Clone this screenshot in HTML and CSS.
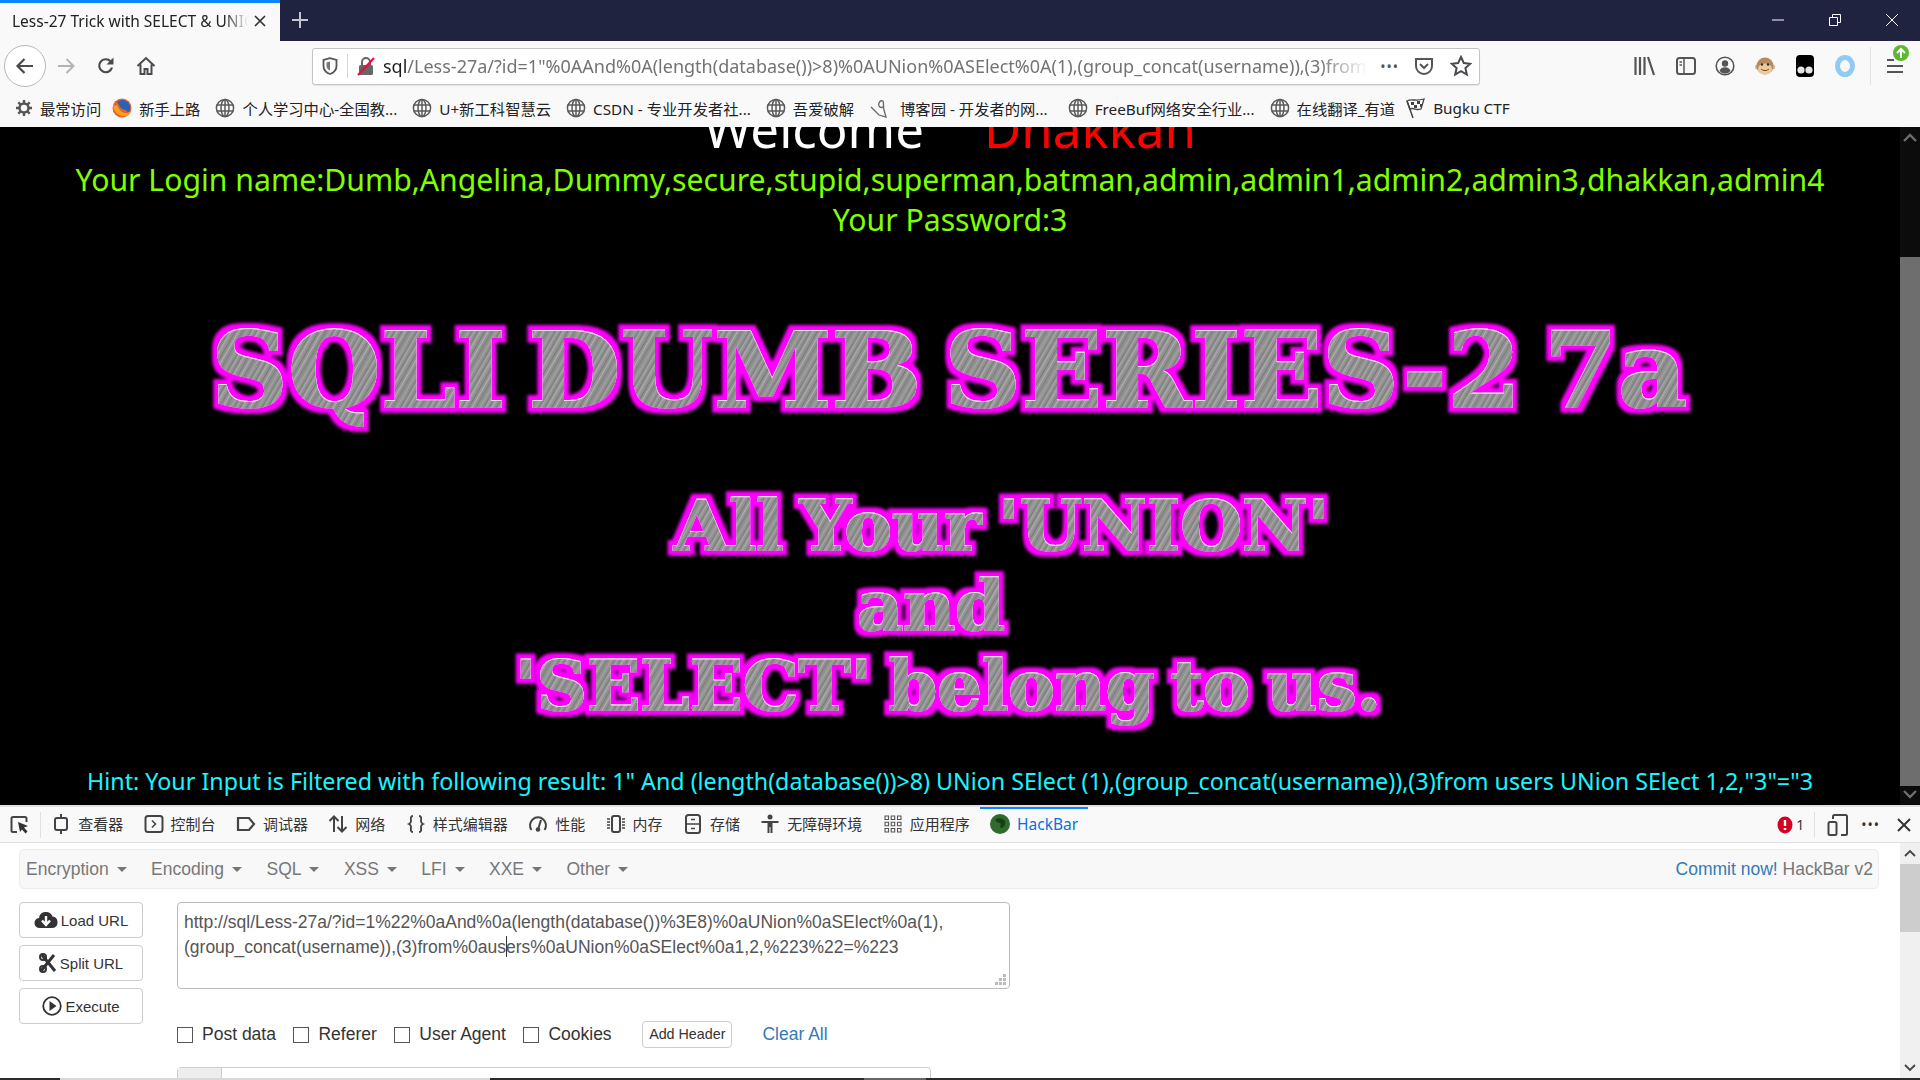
FILE: index.html
```html
<!DOCTYPE html>
<html lang="en">
<head>
  <meta charset="UTF-8" />
  <title>Less-27 Trick with SELECT &amp; UNION</title>
  <link rel="stylesheet" href="styles.css">
</head>
<body>
  <svg class="defs" width="0" height="0">
    <symbol id="globe" viewBox="0 0 20 20">
      <g fill="none" stroke="#5a5a5a" stroke-width="1.5">
        <circle cx="10" cy="10" r="8.6"/><ellipse cx="10" cy="10" rx="4" ry="8.6"/>
        <path d="M10 1.4v17.2M1.8 7h16.4M1.8 13h16.4"/>
      </g>
    </symbol>
    <pattern id="brushed" width="24" height="24" patternUnits="userSpaceOnUse" patternTransform="rotate(30)">
      <rect width="24" height="24" fill="#929292"/>
      <rect width="1" height="24" fill="#a8a8a8"/>
      <rect x="3" width="1" height="24" fill="#7a7a7a"/>
      <rect x="5" width="1.5" height="24" fill="#aaaaaa"/>
      <rect x="9" width="1" height="24" fill="#787878"/>
      <rect x="12" width="1" height="24" fill="#b2b2b2"/>
      <rect x="15" width="1.5" height="24" fill="#808080"/>
      <rect x="19" width="1" height="24" fill="#a4a4a4"/>
      <rect x="22" width="1" height="24" fill="#7c7c7c"/>
    </pattern>
    <filter id="glow" x="-5%" y="-30%" width="110%" height="160%">
      <feMorphology in="SourceAlpha" operator="dilate" radius="5" result="fat"/>
      <feGaussianBlur in="fat" stdDeviation="1.500" result="soft"/>
      <feFlood flood-color="#ff00ff"/>
      <feComposite in2="soft" operator="in" result="pink"/>
      <feOffset in="SourceAlpha" dy="1" result="down"/>
      <feComposite in="SourceAlpha" in2="down" operator="out" result="edge"/>
      <feFlood flood-color="#ffffff" flood-opacity="0.8"/>
      <feComposite in2="edge" operator="in" result="light"/>
      <feMerge><feMergeNode in="pink"/><feMergeNode in="SourceGraphic"/><feMergeNode in="light"/></feMerge>
    </filter>
  </svg>

  <div class="tabbar">
    <div class="tab">
      <span class="tab-title">Less-27 Trick with SELECT &amp; UNION</span>
      <svg class="tab-close" width="14" height="14" viewBox="0 0 14 14"><path d="M2 2l10 10M12 2L2 12" stroke="#333" stroke-width="1.7"/></svg>
    </div>
    <svg class="new-tab" width="18" height="18" viewBox="0 0 18 18"><path d="M9 1v16M1 9h16" stroke="#c4c6d0" stroke-width="2"/></svg>
    <div class="win-btns">
      <svg width="14" height="14" viewBox="0 0 14 14"><path d="M1 7h12" stroke="#fff" stroke-width="1"/></svg>
      <svg width="14" height="14" viewBox="0 0 14 14"><path d="M1.5 4.5h8v8h-8zM4.500 4.500V1.500h8v8h-3" fill="none" stroke="#fff" stroke-width="1"/></svg>
      <svg width="14" height="14" viewBox="0 0 14 14"><path d="M1 1l12 12M13 1L1 13" stroke="#fff" stroke-width="1"/></svg>
    </div>
  </div>

  <div class="navbar">
    <div class="back-btn">
      <svg width="20" height="20" viewBox="0 0 20 20"><path d="M18 10H3M9.500 3L2.500 10l7 7" fill="none" stroke="#4a4a4f" stroke-width="2.200"/></svg>
    </div>
    <svg class="nav-icon" width="20" height="20" viewBox="0 0 20 20"><path d="M2 10h15M10.500 3l7 7-7 7" fill="none" stroke="#b4b4b6" stroke-width="2"/></svg>
    <svg class="nav-icon" width="20" height="20" viewBox="0 0 20 20"><path d="M16 11.500A6.500 6.500 0 1 1 14.500 5.300" fill="none" stroke="#4a4a4f" stroke-width="2.200"/><path d="M17.500 1.500v7h-7z" fill="#4a4a4f"/></svg>
    <svg class="nav-icon" width="20" height="20" viewBox="0 0 20 20"><path d="M1.500 10L10 2l8.500 8M4.500 8.500V18h4v-5h3v5h4V8.500" fill="none" stroke="#4a4a4f" stroke-width="2"/></svg>

    <div class="urlbar">
      <svg class="url-shield" width="16" height="18" viewBox="0 0 16 18"><path d="M8 1.200L1.500 3v6c0 4 3 6.800 6.500 8 3.500-1.200 6.500-4 6.500-8V3z" fill="none" stroke="#555" stroke-width="1.800"/><path d="M8 4.500L4.500 5.500v3.500c0 2 1.500 3.600 3.500 4.500z" fill="#777"/></svg>
      <span class="url-sep"></span>
      <svg class="url-lock" width="18" height="20" viewBox="0 0 18 20"><rect x="2" y="9" width="14" height="10" rx="1.500" fill="#666"/><path d="M5 9V6a4 4 0 0 1 8 0v3" fill="none" stroke="#666" stroke-width="2"/><path d="M1 19L17 2" stroke="#ff0039" stroke-width="2"/></svg>
      <div class="url-text"><b>sql</b>/Less-27a/?id=1"%0AAnd%0A(length(database())&gt;8)%0AUNion%0ASElect%0A(1),(group_concat(username)),(3)from%0Ausers%0AUNion</div>
      <span class="url-dots">•••</span>
      <svg width="20" height="20" viewBox="0 0 20 20"><path d="M2 3h16v7a8 8 0 0 1-16 0z" fill="none" stroke="#555" stroke-width="2"/><path d="M6 8l4 4 4-4" fill="none" stroke="#555" stroke-width="2"/></svg>
      <svg class="url-star" width="22" height="22" viewBox="0 0 22 22"><path d="M11 2l2.800 6 6.400.7-4.800 4.300 1.400 6.500L11 16.200 5.200 19.500l1.400-6.500L1.800 8.700 8.200 8z" fill="none" stroke="#4a4a4f" stroke-width="2"/></svg>
    </div>

    <div class="tools">
      <svg width="24" height="22" viewBox="0 0 24 22"><path d="M2.500 2v18M7 2v18M11.500 2v18M15 2l6 18" stroke="#555" stroke-width="2.200"/></svg>
      <svg width="20" height="20" viewBox="0 0 20 20"><rect x="1" y="2" width="18" height="16" rx="2.500" fill="none" stroke="#555" stroke-width="2"/><path d="M8 2v16M3.500 6h2.500M3.500 9h2.500" stroke="#555" stroke-width="1.500"/></svg>
      <svg width="20" height="20" viewBox="0 0 20 20"><circle cx="10" cy="10" r="8.800" fill="none" stroke="#555" stroke-width="1.600"/><circle cx="10" cy="7.500" r="3.200" fill="#555"/><path d="M4.500 15c1-3 3-3.800 5.500-3.800s4.500.8 5.500 3.800a7 7 0 0 1-11 0z" fill="#555"/></svg>
      <svg width="22" height="22" viewBox="0 0 22 22"><circle cx="3.500" cy="12" r="2.500" fill="#d8b08c"/><circle cx="18.500" cy="12" r="2.500" fill="#d8b08c"/><circle cx="11" cy="11" r="8.500" fill="#b98a5e"/><ellipse cx="11" cy="14" rx="7" ry="5.500" fill="#ecc99f"/><circle cx="8" cy="9.500" r="1.200" fill="#333"/><circle cx="14" cy="9.500" r="1.200" fill="#333"/><path d="M7 14c2 2 6 2 8 0" fill="none" stroke="#6b4a2c" stroke-width="1"/></svg>
      <svg width="20" height="24" viewBox="0 0 20 24"><rect x="1" y="1" width="18" height="22" rx="4" fill="#000"/><circle cx="6" cy="16" r="3.600" fill="#e6e6e6"/><circle cx="14" cy="16" r="3.600" fill="#e6e6e6"/></svg>
      <svg width="22" height="24" viewBox="0 0 22 24"><ellipse cx="11" cy="12" rx="7.500" ry="8.500" fill="none" stroke="#8fcbf5" stroke-width="5"/></svg>
      <span class="tools-sep"></span>
      <div class="menu-btn">
        <svg width="18" height="18" viewBox="0 0 18 18"><path d="M1 3h7M1 9h16M1 15h16" stroke="#555" stroke-width="2.200"/></svg>
        <svg class="menu-badge" width="16" height="16" viewBox="0 0 16 16"><circle cx="8" cy="8" r="8" fill="#5cb82e"/><path d="M8 13V4M4 8l4-4 4 4" fill="none" stroke="#fff" stroke-width="2"/></svg>
      </div>
    </div>
  </div>

  <div class="bookmarks">
    <div class="bm"><svg width="18" height="18" viewBox="0 0 18 18"><circle cx="9" cy="9" r="4.500" fill="none" stroke="#555" stroke-width="2.500"/><path d="M9 1v3M9 14v3M1 9h3M14 9h3M3.300 3.300l2.200 2.200M12.500 12.500l2.200 2.200M14.700 3.300l-2.200 2.200M5.500 12.500l-2.200 2.200" stroke="#555" stroke-width="2.400"/></svg>最常访问</div>
    <div class="bm bm-fox"><svg width="20" height="22" viewBox="0 0 20 22"><circle cx="10" cy="11" r="9.500" fill="#e8622a"/><path d="M5 5c3-3 10-3 13 3 1 3 0 6-2 8-1-4-5-3-7-5s-2-4-4-6z" fill="#2a62b8"/><path d="M1 9c1 7 7 11 13 10 2 0 4-2 5-5-2 2-6 3-9 1S6 10 5 8z" fill="#f9a01e"/></svg>新手上路</div>
    <div class="bm"><svg width="20" height="20"><use href="#globe"/></svg>个人学习中心-全国教...</div>
    <div class="bm"><svg width="20" height="20"><use href="#globe"/></svg>U+新工科智慧云</div>
    <div class="bm"><svg width="20" height="20"><use href="#globe"/></svg>CSDN - 专业开发者社...</div>
    <div class="bm"><svg width="20" height="20"><use href="#globe"/></svg>吾爱破解</div>
    <div class="bm bm-blog"><svg width="20" height="20" viewBox="0 0 20 20"><path d="M2 9l8 8 7 2-2-7c-1-4 0-6-1-9-3-1-5 2-4 5 1 2 4 2 5 0" fill="none" stroke="#666" stroke-width="1.300"/></svg>博客园 - 开发者的网...</div>
    <div class="bm bm-free"><svg width="20" height="20"><use href="#globe"/></svg>FreeBuf网络安全行业...</div>
    <div class="bm"><svg width="20" height="20"><use href="#globe"/></svg>在线翻译_有道</div>
    <div class="bm bm-flag"><svg width="20" height="22" viewBox="0 0 20 22"><path d="M1 4c5-3 8 1 17-2l-3 10C9 14 7 10 4 12z" fill="#fff" stroke="#444" stroke-width="1.300"/><path d="M1 4l6 17" stroke="#444" stroke-width="1.500"/><path d="M5 5h3v3H5zM11 4h3v3h-3zM8 8h3v3H8zM14 7h2v3h-2z" fill="#444"/></svg>Bugku CTF</div>
  </div>

  <div class="page">
    <div class="page-main">
      <div class="welcome"><span class="w-white">Welcome</span><span class="w-red">Dhakkan</span></div>
      <div class="login">Your Login name:Dumb,Angelina,Dummy,secure,stupid,superman,batman,admin,admin1,admin2,admin3,dhakkan,admin4</div>
      <div class="login">Your Password:3</div>
      <svg class="title-art" width="1900" height="521" viewBox="0 0 1900 521">
        <g class="art-text" filter="url(#glow)" fill="url(#brushed)" stroke="url(#brushed)" stroke-width="1.600">
          <text class="art-big" x="211" y="167" textLength="1476" lengthAdjust="spacingAndGlyphs">SQLI DUMB SERIES-2 7a</text>
          <text class="art-small" x="674" y="310" textLength="655" lengthAdjust="spacingAndGlyphs">All Your 'UNION'</text>
          <text class="art-small" x="857" y="390" textLength="148" lengthAdjust="spacingAndGlyphs">and</text>
          <text class="art-small" x="515" y="470" textLength="866" lengthAdjust="spacingAndGlyphs">'SELECT' belong to us.</text>
        </g>
      </svg>
      <div class="hint">Hint: Your Input is Filtered with following result: 1" And (length(database())&gt;8) UNion SElect (1),(group_concat(username)),(3)from users UNion SElect 1,2,"3"="3</div>
    </div>
    <div class="page-scroll">
      <svg width="14" height="10" viewBox="0 0 14 10"><path d="M1 8l6-6 6 6" fill="none" stroke="#6e6e6e" stroke-width="2.400"/></svg>
      <div class="page-thumb"></div>
      <svg width="14" height="10" viewBox="0 0 14 10"><path d="M1 2l6 6 6-6" fill="none" stroke="#6e6e6e" stroke-width="2.400"/></svg>
    </div>
  </div>

  <div class="devtools">
    <div class="dt-bar">
      <div class="dt-pick">
        <svg width="20" height="20" viewBox="0 0 20 20"><path d="M7 17H3a1.500 1.500 0 0 1-1.500-1.500v-12A1.500 1.500 0 0 1 3 2h12a1.500 1.500 0 0 1 1.500 1.500V7" fill="none" stroke="#444" stroke-width="2"/><path d="M8 7l10 4-4 1.500 3.500 4-2 2-3.500-4L10 17z" fill="#333"/></svg>
      </div>
      <div class="dt-tab"><svg width="20" height="20" viewBox="0 0 20 20"><rect x="4" y="4" width="12" height="12" rx="2" fill="none" stroke="#444" stroke-width="2"/><path d="M10 0v4M10 16v4" stroke="#444" stroke-width="2"/></svg>查看器</div>
      <div class="dt-tab"><svg width="20" height="20" viewBox="0 0 20 20"><rect x="1.500" y="2" width="17" height="16" rx="2.500" fill="none" stroke="#444" stroke-width="2"/><path d="M8 6.500l3.500 3.500L8 13.500" fill="none" stroke="#444" stroke-width="1.600"/></svg>控制台</div>
      <div class="dt-tab"><svg width="20" height="20" viewBox="0 0 20 20"><path d="M2 4h11l5 6-5 6H2z" fill="none" stroke="#444" stroke-width="2.200"/></svg>调试器</div>
      <div class="dt-tab"><svg width="20" height="20" viewBox="0 0 20 20"><path d="M6 18V3M1.500 7L6 2.500 10.500 7M14 2v15M9.500 13l4.500 4.500 4.500-4.500" fill="none" stroke="#444" stroke-width="2"/></svg>网络</div>
      <div class="dt-tab"><svg width="20" height="20" viewBox="0 0 20 20"><path d="M7 2C4 2 5 5 5 7s-2 3-2 3 2 1 2 3-1 5 2 5M13 2c3 0 2 3 2 5s2 3 2 3-2 1-2 3 1 5-2 5" fill="none" stroke="#444" stroke-width="1.900"/></svg>样式编辑器</div>
      <div class="dt-tab"><svg width="20" height="20" viewBox="0 0 20 20"><path d="M3.500 16a8 8 0 1 1 13 0" fill="none" stroke="#444" stroke-width="2"/><path d="M13 6l-2.500 8" stroke="#444" stroke-width="2"/><circle cx="10" cy="15.500" r="2.300" fill="#444"/></svg>性能</div>
      <div class="dt-tab"><svg width="20" height="20" viewBox="0 0 20 20"><rect x="6" y="2" width="8" height="16" rx="2" fill="none" stroke="#444" stroke-width="2"/><path d="M1 5h3M1 8h3M1 11h3M1 14h3M16 5h3M16 8h3M16 11h3M16 14h3" stroke="#444" stroke-width="1.300"/></svg>内存</div>
      <div class="dt-tab"><svg width="20" height="20" viewBox="0 0 20 20"><rect x="3" y="1" width="14" height="18" rx="2.500" fill="none" stroke="#444" stroke-width="2"/><path d="M3 10h14M8 5.500h4M8 14.500h4" stroke="#444" stroke-width="1.600"/></svg>存储</div>
      <div class="dt-tab"><svg width="20" height="20" viewBox="0 0 20 20"><circle cx="10" cy="3" r="2.500" fill="#444"/><path d="M1.500 7h17v2h-6v10h-2v-6h-1v6h-2V9h-6z" fill="#444"/></svg>无障碍环境</div>
      <div class="dt-tab"><svg width="20" height="20" viewBox="0 0 20 20"><path d="M2 2h3.500v3.500H2zM8.200 2h3.500v3.500H8.200zM14.500 2H18v3.500h-3.500zM2 8.200h3.500v3.500H2zM8.200 8.200h3.500v3.500H8.200zM14.500 8.200H18v3.500h-3.500zM2 14.500h3.500V18H2zM8.200 14.500h3.500V18H8.200zM14.500 14.500H18V18h-3.500z" fill="none" stroke="#555" stroke-width="1.100"/></svg>应用程序</div>
      <div class="dt-tab dt-active"><svg width="20" height="20" viewBox="0 0 20 20"><circle cx="10" cy="10" r="10" fill="#2f6b2a"/><path d="M5 6c3-3 8-2 10 1 1 3-1 7-4 7-2-1 1-3-1-5-2-1-3 0-5-3z" fill="#173f15"/></svg>HackBar</div>
      <div class="dt-right">
        <svg width="16" height="18" viewBox="0 0 16 18"><ellipse cx="8" cy="9" rx="7.500" ry="8.500" fill="#d70022"/><path d="M8 4v6M8 12v2" stroke="#fff" stroke-width="2.400"/></svg>
        <span class="dt-count">1</span>
        <span class="dt-sep"></span>
        <svg class="dt-resp" width="22" height="22" viewBox="0 0 22 22"><rect x="1.500" y="8" width="8" height="13" rx="1.500" fill="none" stroke="#444" stroke-width="2"/><path d="M6 5V2.500A1.500 1.500 0 0 1 7.500 1h11A1.500 1.500 0 0 1 20 2.500v17a1.500 1.500 0 0 1-1.500 1.500H14" fill="none" stroke="#444" stroke-width="2"/></svg>
        <span class="dt-dots">•••</span>
        <svg width="16" height="16" viewBox="0 0 16 16"><path d="M2 2l12 12M14 2L2 14" stroke="#333" stroke-width="2"/></svg>
      </div>
    </div>

    <div class="dt-panel">
      <div class="hackbar">
        <div class="hb-nav">
          <span class="hb-item">Encryption</span>
          <span class="hb-item">Encoding</span>
          <span class="hb-item">SQL</span>
          <span class="hb-item">XSS</span>
          <span class="hb-item">LFI</span>
          <span class="hb-item">XXE</span>
          <span class="hb-item">Other</span>
          <span class="hb-commit"><a>Commit now!</a> HackBar v2</span>
        </div>
        <div class="hb-body">
          <div class="hb-actions">
            <div class="hb-btn"><svg width="24" height="20" viewBox="0 0 24 20"><path d="M6 18a5 5 0 0 1-1-10 7 7 0 0 1 13.500-1.500A5.800 5.800 0 0 1 18.500 18z" fill="#333"/><path d="M12 6v7M8 10.500l4 4.500 4-4.500" fill="none" stroke="#fff" stroke-width="2.400"/></svg>Load URL</div>
            <div class="hb-btn"><svg width="18" height="20" viewBox="0 0 18 20"><path d="M3 2l13 16M15 2L2 18" stroke="#333" stroke-width="3"/><circle cx="4" cy="4" r="3" fill="none" stroke="#333" stroke-width="2"/><circle cx="4" cy="16" r="3" fill="none" stroke="#333" stroke-width="2"/></svg>Split URL</div>
            <div class="hb-btn"><svg width="20" height="20" viewBox="0 0 20 20"><circle cx="10" cy="10" r="8.800" fill="none" stroke="#333" stroke-width="1.800"/><path d="M7.500 5l7 5-7 5z" fill="#333"/></svg>Execute</div>
          </div>
          <div class="hb-main">
            <div class="hb-url">http://sql/Less-27a/?id=1%22%0aAnd%0a(length(database())%3E8)%0aUNion%0aSElect%0a(1),<br>(group_concat(username)),(3)from%0aus<span class="caret"></span>ers%0aUNion%0aSElect%0a1,2,%223%22=%223
              <svg class="hb-resize" width="12" height="12" viewBox="0 0 12 12"><path d="M8 0h3v3H8zM4 4h3v3H4zM8 4h3v3H8zM0 8h3v3H0zM4 8h3v3H4zM8 8h3v3H8z" fill="#bbb"/></svg>
            </div>
            <div class="hb-opts">
              <label class="hb-check"><span class="box"></span>Post data</label>
              <label class="hb-check"><span class="box"></span>Referer</label>
              <label class="hb-check"><span class="box"></span>User Agent</label>
              <label class="hb-check"><span class="box"></span>Cookies</label>
              <span class="hb-add">Add Header</span>
              <a class="hb-clear">Clear All</a>
            </div>
            <div class="hb-row"><span class="hb-addon"></span></div>
          </div>
        </div>
      </div>
      <div class="dt-scroll">
        <svg width="12" height="8" viewBox="0 0 12 8"><path d="M1 7l5-5 5 5" fill="none" stroke="#444" stroke-width="1.800"/></svg>
        <div class="dt-thumb"></div>
        <svg width="12" height="8" viewBox="0 0 12 8"><path d="M1 1l5 5 5-5" fill="none" stroke="#444" stroke-width="1.800"/></svg>
      </div>
    </div>
  </div>

  <div class="taskstrip"><span class="ts-a"></span><span class="ts-b"></span><span class="ts-c"></span><span class="ts-d"></span><span class="ts-a ts-grow"></span></div>
</body>
</html>
```

FILE: styles.css
```css
* {
  box-sizing: border-box;
}
html, body {
  margin: 0;
  height: 100%;
}
body {
  width: 1920px;
  height: 1080px;
  overflow: hidden;
  display: flex;
  flex-direction: column;
  background: #f9f9fa;
  color: #2b2b2b;
  font-family: "Noto Sans", "Noto Sans CJK SC", sans-serif;
}
.defs {
  position: absolute;
}
svg {
  flex: none;
}

/* browser chrome */
.tabbar {
  height: 41px;
  flex: none;
  display: flex;
  align-items: center;
  background: #1f2340;
}
.tab {
  width: 280px;
  height: 41px;
  display: flex;
  align-items: center;
  padding: 0 0 3px 12px;
  background: #f9f9fa;
  border-top: 3px solid #0a84ff;
  color: #222;
}
.tab-title {
  width: 236px;
  font-size: 15.500px;
  white-space: nowrap;
  overflow: hidden;
  -webkit-mask-image: linear-gradient(90deg, #000 90%, transparent);
  mask-image: linear-gradient(90deg, #000 90%, transparent);
}
.tab-close {
  margin-left: 5px;
}
.new-tab {
  margin: 0 0 2px 11px;
}
.win-btns {
  margin: 0 0 2px auto;
  display: flex;
  gap: 43px;
  padding-right: 21px;
}
.navbar {
  height: 50px;
  flex: none;
  display: flex;
  align-items: center;
  padding-left: 4px;
  background: #f9f9fa;
}
.back-btn {
  width: 42px;
  height: 42px;
  border: 1px solid #b8b8bb;
  border-radius: 50%;
  background: #fff;
  display: flex;
  align-items: center;
  justify-content: center;
}
.nav-icon {
  margin-left: 20px;
}
.back-btn + .nav-icon {
  margin-left: 10px;
}
.urlbar {
  width: 1168px;
  height: 37px;
  margin-left: 156px;
  display: flex;
  align-items: center;
  padding: 0 7px 0 9px;
  background: #fff;
  border: 1px solid #c4c4c6;
  border-radius: 3px;
  box-shadow: 0 1px 1px rgba(0,0,0,0.08);
}
.url-sep {
  width: 1px;
  height: 24px;
  margin: 0 9px 0 9px;
  background: #d8d8da;
}
.url-text {
  width: 988px;
  margin-left: 8px;
  font-size: 18px;
  color: #737373;
  white-space: nowrap;
  overflow: hidden;
  -webkit-mask-image: linear-gradient(90deg, #000 95%, transparent);
  mask-image: linear-gradient(90deg, #000 95%, transparent);
}
.url-text b {
  font-weight: 400;
  color: #1c1c1c;
}
.url-dots {
  margin: 0 15px 0 12px;
  font-size: 14px;
  letter-spacing: 1px;
  color: #555;
}
.url-star {
  margin-left: 16px;
}
.tools {
  flex: 1;
  display: flex;
  align-items: center;
  gap: 19px;
  padding-left: 153px;
}
.tools-sep {
  width: 1px;
  height: 38px;
  margin-left: -5px;
  background: #e2e2e4;
}
.menu-btn {
  position: relative;
  margin-left: -4px;
  display: flex;
}
.menu-badge {
  position: absolute;
  top: -12px;
  left: 7px;
}
.bookmarks {
  height: 36px;
  flex: none;
  display: flex;
  align-items: center;
  gap: 15px;
  padding: 0 0 2px 15px;
  background: #f9f9fa;
}
.bm {
  display: flex;
  align-items: center;
  gap: 7px;
  font-size: 15.300px;
  color: #222;
  white-space: nowrap;
}
.bm-fox {
  margin-left: -4px;
}
.bm-blog {
  gap: 11px;
}
.bm-free {
  margin-left: 5px;
}
.bm-flag {
  margin-left: -4px;
}

/* sqli page */
.page {
  height: 678px;
  flex: none;
  display: flex;
  background: #000;
}
.page-main {
  flex: 1;
  min-width: 0;
  overflow: hidden;
  text-align: center;
}
.welcome {
  height: 60px;
  margin: -29px 0 2px;
  font-size: 51px;
  line-height: 60px;
}
.w-white {
  color: #fff;
}
.w-red {
  margin-left: 60px;
  color: #ff0000;
}
.login {
  font-size: 30.200px;
  line-height: 40px;
  white-space: nowrap;
  color: #7fff00;
}
.title-art {
  display: block;
}
.art-text text {
  font-family: "DejaVu Serif", "Liberation Serif", serif;
  font-weight: 700;
}
.art-big {
  font-size: 105px;
  word-spacing: -14px;
}
.art-small {
  font-size: 70px;
  word-spacing: -8px;
}
.hint {
  font-size: 23.250px;
  line-height: 40px;
  white-space: nowrap;
  color: #19f5ff;
}
.page-scroll {
  width: 20px;
  display: flex;
  flex-direction: column;
  align-items: center;
  padding: 6px 0;
  background: #0c0c0c;
}
.page-thumb {
  width: 20px;
  height: 529px;
  margin-top: 114px;
  background: #6e6e6e;
}
.page-scroll svg:last-child {
  margin-top: auto;
}

/* devtools */
.devtools {
  height: 273px;
  flex: none;
  display: flex;
  flex-direction: column;
  border-top: 2px solid #e0e0e2;
  background: #fff;
}
.dt-bar {
  height: 36px;
  flex: none;
  display: flex;
  align-items: center;
  background: #f9f9fa;
  border-bottom: 1px solid #e0e0e2;
  font-size: 15px;
  color: #333;
}
.dt-pick {
  width: 41px;
  height: 26px;
  padding-left: 10px;
  display: flex;
  align-items: center;
  border-right: 1px solid #e0e0e2;
}
.dt-tab {
  height: 35px;
  display: flex;
  align-items: center;
  gap: 7px;
  padding: 0 10.200px 2px;
  white-space: nowrap;
}
.dt-active {
  color: #0a6fdb;
  font-size: 15.500px;
  box-shadow: inset 0 2px 0 #0a84ff;
}
.dt-right {
  margin-left: auto;
  display: flex;
  align-items: center;
  padding-right: 8px;
}
.dt-count {
  margin-left: 3px;
  font-size: 14px;
}
.dt-sep {
  width: 1px;
  height: 26px;
  margin: 0 12px 0 10px;
  background: #e0e0e2;
}
.dt-dots {
  margin: 0 16px 0 12px;
  font-size: 14px;
  letter-spacing: 1px;
}
.dt-panel {
  flex: 1;
  min-height: 0;
  display: flex;
}
.hackbar {
  flex: 1;
  min-width: 0;
  overflow: hidden;
  padding: 6px 21px 0 19px;
  font-family: "Liberation Sans", Arial, sans-serif;
  font-size: 17.500px;
  color: #555;
}
.hb-nav {
  height: 40px;
  display: flex;
  align-items: center;
  gap: 24.400px;
  padding: 0 5px 0 6px;
  background: #f8f8f8;
  border: 1px solid #ececec;
  border-radius: 5px;
  color: #777;
}
.hb-item::after {
  content: "";
  display: inline-block;
  margin-left: 8px;
  vertical-align: middle;
  border-top: 5px solid #777;
  border-left: 5px solid transparent;
  border-right: 5px solid transparent;
}
.hb-commit {
  margin-left: auto;
}
.hb-commit a, .hb-clear {
  color: #337ab7;
}
.hb-body {
  display: flex;
  margin-top: 13px;
}
.hb-actions {
  width: 124px;
  flex: none;
  display: flex;
  flex-direction: column;
  gap: 7px;
}
.hb-btn {
  height: 36px;
  display: flex;
  align-items: center;
  justify-content: center;
  gap: 3px;
  background: #fff;
  border: 1px solid #ccc;
  border-radius: 4px;
  color: #333;
  font-size: 15px;
}
.hb-main {
  flex: 1;
  margin-left: 34px;
}
.hb-url {
  position: relative;
  width: 833px;
  height: 87px;
  padding: 7px 6px;
  background: #fff;
  border: 1px solid #bbb;
  border-radius: 4px;
  line-height: 25px;
  font-size: 17.500px;
  color: #555;
  white-space: nowrap;
}
.caret {
  display: inline-block;
  width: 1px;
  height: 21px;
  margin-right: -1px;
  vertical-align: text-bottom;
  background: #333;
}
.hb-resize {
  position: absolute;
  right: 2px;
  bottom: 2px;
}
.hb-opts {
  display: flex;
  align-items: center;
  height: 27px;
  margin-top: 32px;
}
.hb-check {
  display: flex;
  align-items: center;
  gap: 9px;
  margin-right: 17.500px;
  color: #333;
}
.box {
  width: 16px;
  height: 16px;
  background: #fff;
  border: 1px solid #555;
}
.hb-add {
  margin-left: 13px;
  padding: 0 6px;
  height: 27px;
  line-height: 25px;
  background: #fff;
  border: 1px solid #ccc;
  border-radius: 4px;
  font-size: 14.300px;
  color: #333;
}
.hb-clear {
  margin-left: 30px;
}
.hb-row {
  width: 754px;
  height: 30px;
  margin-top: 19px;
  border: 1px solid #ccc;
  border-radius: 4px;
}
.hb-addon {
  display: block;
  width: 44px;
  height: 100%;
  background: #eee;
  border-right: 1px solid #ccc;
}
.dt-scroll {
  width: 20px;
  display: flex;
  flex-direction: column;
  align-items: center;
  padding: 6px 0;
  background: #f0f0f0;
}
.dt-thumb {
  width: 20px;
  height: 68px;
  margin-top: 7px;
  background: #cdcdcd;
}
.dt-scroll svg:last-child {
  margin-top: auto;
}
.taskstrip {
  height: 2px;
  flex: none;
  display: flex;
}
.ts-a {
  width: 60px;
  background: #2b2b2b;
}
.ts-b {
  width: 430px;
  background: #d8d8d8;
}
.ts-c {
  width: 374px;
  background: #2b2b2b;
}
.ts-d {
  width: 62px;
  background: #666;
}
.ts-grow {
  flex: 1;
}
```
